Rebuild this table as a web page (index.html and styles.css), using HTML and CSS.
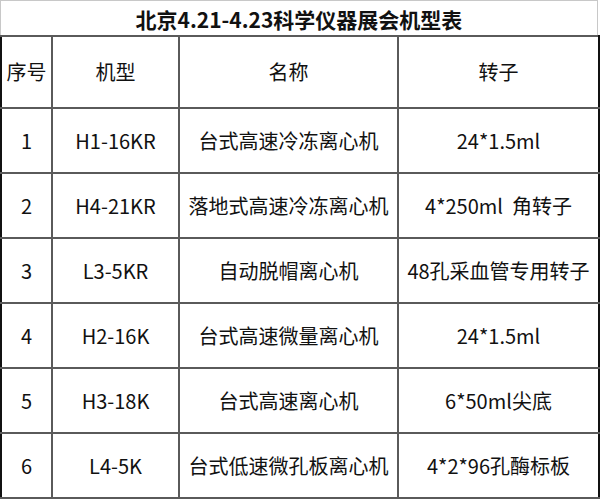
FILE: index.html
```html
<!DOCTYPE html>
<html lang="zh-CN">
<head>
<meta charset="utf-8">
<title>北京4.21-4.23科学仪器展会机型表</title>
<link rel="stylesheet" href="styles.css">
</head>
<body>
<div class="sheet">
  <div class="title">北京4.21-4.23科学仪器展会机型表</div>
  <table class="models">
    <colgroup>
      <col class="c-no">
      <col class="c-model">
      <col class="c-name">
      <col class="c-rotor">
    </colgroup>
    <thead>
      <tr><th>序号</th><th>机型</th><th>名称</th><th>转子</th></tr>
    </thead>
    <tbody>
      <tr><td>1</td><td>H1-16KR</td><td>台式高速冷冻离心机</td><td>24*1.5ml</td></tr>
      <tr><td>2</td><td>H4-21KR</td><td>落地式高速冷冻离心机</td><td>4*250ml&nbsp; 角转子</td></tr>
      <tr><td>3</td><td>L3-5KR</td><td>自动脱帽离心机</td><td>48孔采血管专用转子</td></tr>
      <tr><td>4</td><td>H2-16K</td><td>台式高速微量离心机</td><td>24*1.5ml</td></tr>
      <tr><td>5</td><td>H3-18K</td><td>台式高速离心机</td><td>6*50ml尖底</td></tr>
      <tr><td>6</td><td>L4-5K</td><td>台式低速微孔板离心机</td><td>4*2*96孔酶标板</td></tr>
    </tbody>
  </table>
</div>
</body>
</html>
```

FILE: styles.css
```css
html, body {
  margin: 0;
  padding: 0;
  background: #ffffff;
}

.sheet {
  width: 598px;
  font-family: "Noto Sans CJK SC", "Noto Sans", sans-serif;
  color: #111111;
}

.title {
  height: 35px;
  box-sizing: border-box;
  border: 1px solid #c8c8c8;
  border-bottom: none;
  display: flex;
  align-items: center;
  justify-content: center;
  font-size: 21px;
  font-weight: bold;
  line-height: 1;
  padding-top: 2px;
}

.models {
  width: 598px;
  border-collapse: collapse;
  table-layout: fixed;
  border-left: 2px solid #111111;
  border-right: 2px solid #111111;
  border-bottom: 2px solid #333333;
}

.c-no { width: 51px; }
.c-model { width: 127px; }
.c-name { width: 219px; }
.c-rotor { width: 201px; }

.models th,
.models td {
  border: 2px solid #5a5a5a;
  text-align: center;
  vertical-align: middle;
  font-size: 20px;
  font-weight: normal;
  padding: 0;
  white-space: nowrap;
  line-height: 1.2;
}

.models th {
  height: 70px;
}

.models td {
  height: 63px;
}

.models tr > :first-child {
  border-left: 2px solid #111111;
}

.models tr > :last-child {
  border-right: 2px solid #111111;
}
```
